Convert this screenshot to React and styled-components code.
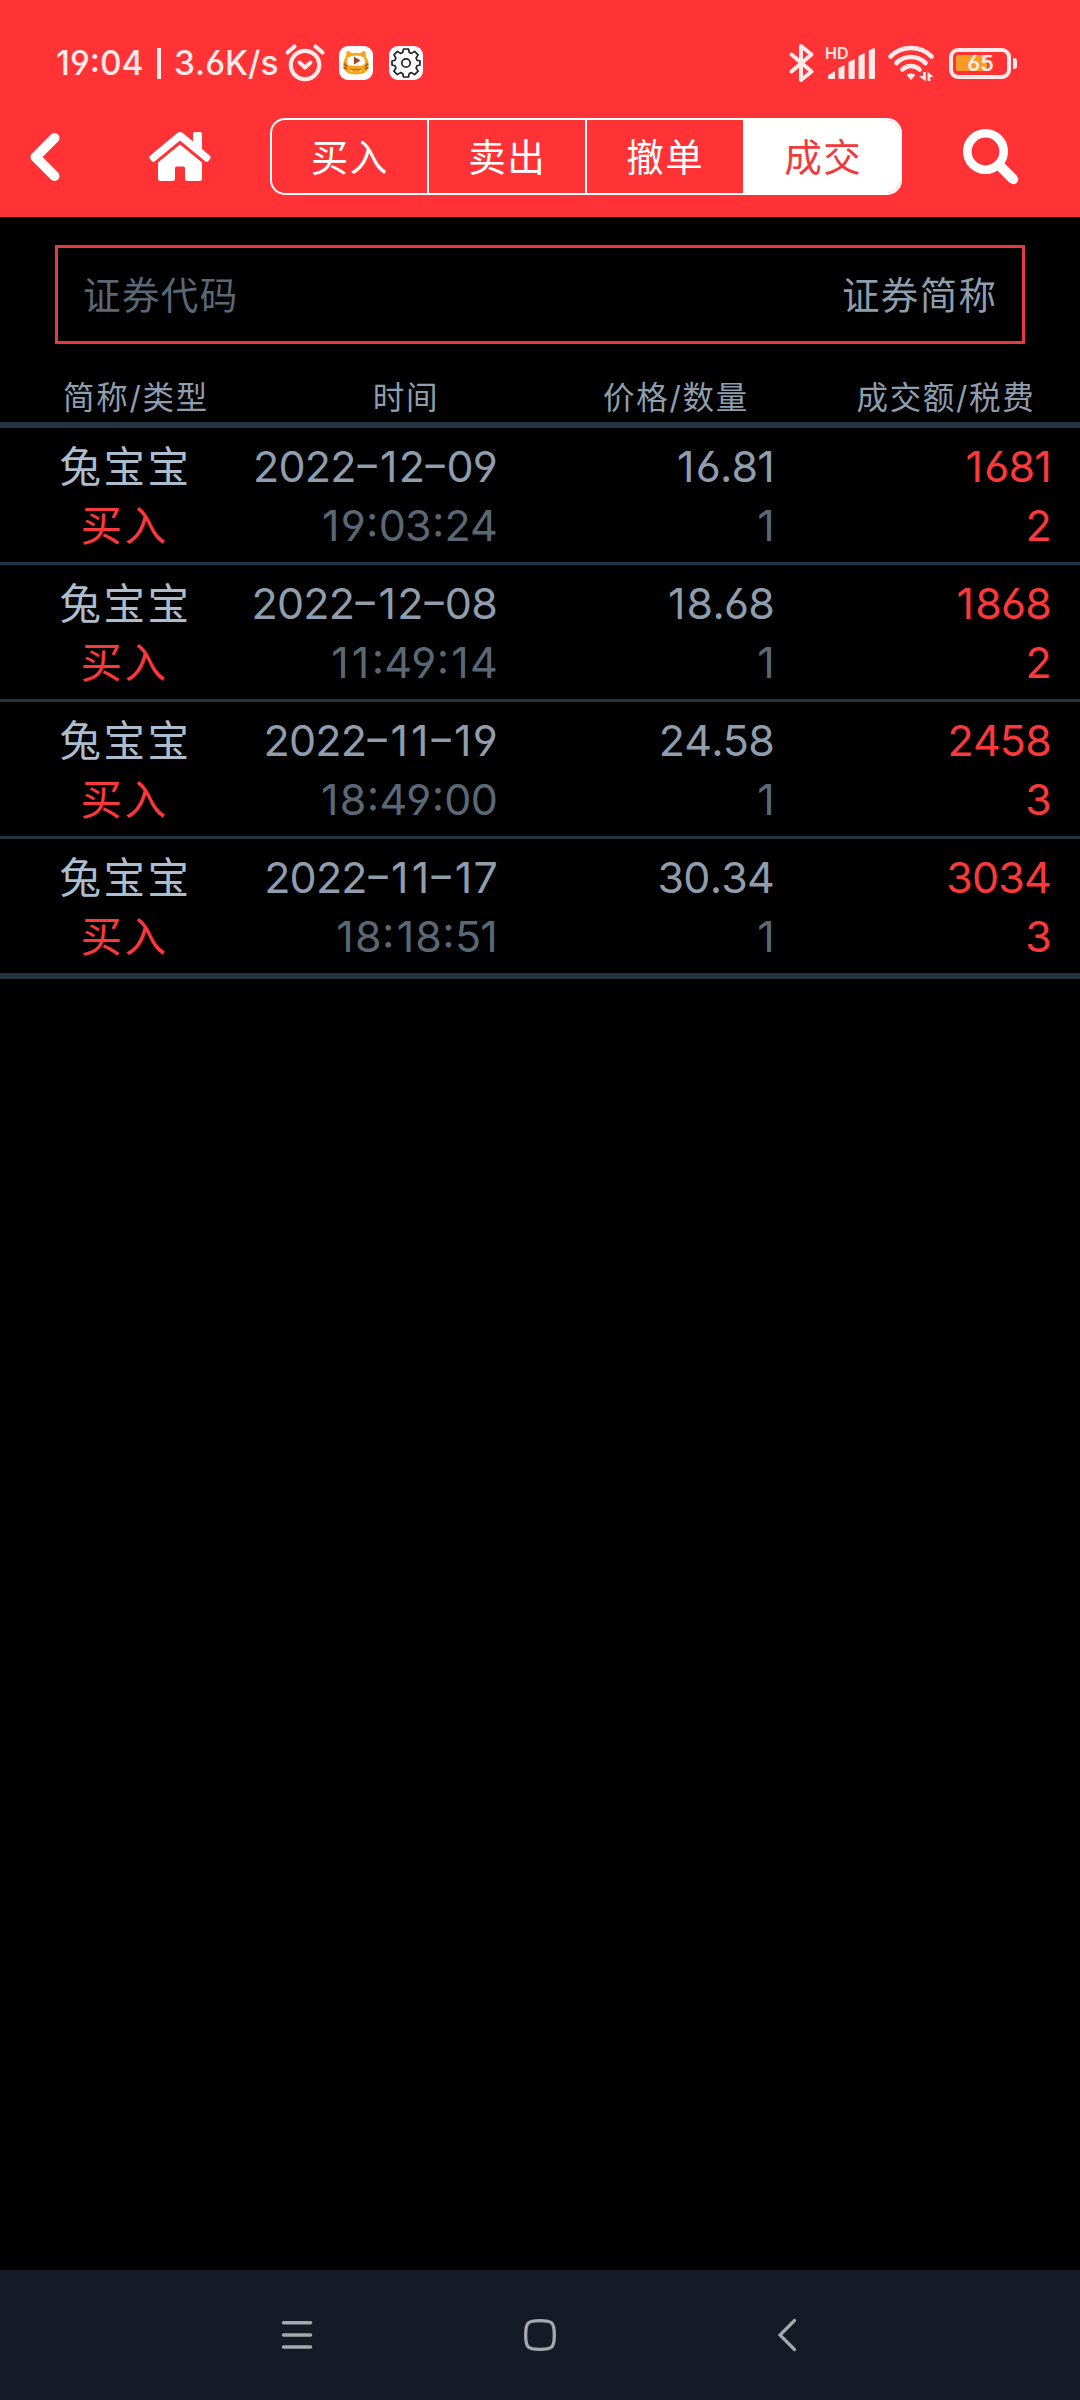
import React, { useState } from 'react';
import styled, { createGlobalStyle } from 'styled-components';

const GlobalStyle = createGlobalStyle`
  * {
    box-sizing: border-box;
  }

  body {
    margin: 0;
    background: #000;
    font-family: 'Inter', 'Noto Sans CJK SC', sans-serif;
    font-feature-settings: 'cv03', 'cv04';
    font-kerning: none;
  }
`;

const Screen = styled.div`
  display: flex;
  flex-direction: column;
  width: 1080px;
  height: 2400px;
  background: #000;
  overflow: hidden;
`;

const Header = styled.header`
  height: 217px;
  background: #ff3335;
`;

const StatusBar = styled.div`
  display: flex;
  align-items: flex-start;
  justify-content: space-between;
  height: 100px;
  padding: 43px 63px 0 56px;
  color: #ffe9e9;
`;

const StatusGroup = styled.div`
  display: flex;
  align-items: center;
  height: 40px;
`;

const StatusText = styled.span`
  width: ${props => props.width}px;
  font-size: 33.5px;
  font-weight: 500;
  line-height: 41px;
  white-space: nowrap;
`;

const StatusDivider = styled.span`
  width: 4px;
  height: 31px;
  margin-right: 13px;
  background: #ffe9e9;
`;

const Icon = styled.svg`
  display: block;
  flex: none;
  width: ${props => props.width}px;
  height: ${props => props.height}px;
  margin-left: ${props => props.$left || 0}px;
  overflow: visible;
`;

const Toolbar = styled.div`
  display: flex;
  align-items: center;
  height: 77px;
  margin-top: 18px;
`;

const IconButton = styled.button`
  display: flex;
  align-items: center;
  justify-content: center;
  width: ${props => props.width}px;
  height: 77px;
  padding: 0 1px 0 0;
  border: none;
  background: none;
  color: #fff;
  cursor: pointer;
`;

const Tabs = styled.div`
  display: grid;
  grid-template-columns: 155px repeat(3, 158px);
  width: 633px;
  height: 77px;
  border: 2px solid #fff;
  border-radius: 15px;
  overflow: hidden;
`;

const Tab = styled.button`
  padding: 2px 0 0 1px;
  border: none;
  border-left: ${props => (props.$first ? 'none' : '2px solid #fff')};
  background: ${props => (props.$active ? '#fff' : 'transparent')};
  color: ${props => (props.$active ? '#f03a3c' : '#fff')};
  font-family: inherit;
  font-size: 37.5px;
  line-height: 71px;
  letter-spacing: 1.4px;
  cursor: pointer;
`;

const SearchBox = styled.div`
  display: flex;
  align-items: center;
  justify-content: space-between;
  height: 99px;
  margin: 28px 55px 0;
  padding: 2px 24.5px 0 25px;
  border: 3px solid #e73a3e;
`;

const SearchLabel = styled.span`
  color: ${props => (props.$muted ? '#5a6876' : '#8f9dad')};
  font-size: 37.5px;
  line-height: 56px;
  letter-spacing: 1.4px;
`;

const TableHead = styled.div`
  display: grid;
  grid-template-columns: repeat(4, 1fr);
  height: 84px;
  padding-top: 28px;
  border-bottom: 6px solid #243442;
  color: #8f9dad;
  font-size: 31.5px;
  line-height: 52px;
  letter-spacing: 1.7px;
  text-align: center;
`;

const HeadCell = styled.span`
  padding-left: 2px;
`;

const TradeList = styled.div`
  flex: 1;
`;

const TradeRow = styled.div`
  display: grid;
  grid-template-columns: 248px 249px 277px 277px;
  height: ${props => (props.$last ? 140 : 137)}px;
  padding-top: 8px;
  border-bottom: ${props => (props.$last ? 6 : 3)}px solid #243442;
`;

const Cell = styled.div`
  display: flex;
  flex-direction: column;
  align-items: flex-end;
  padding-top: 1px;
  color: ${props => props.color || '#8f9dad'};
`;

const NameCell = styled(Cell)`
  align-items: center;
  padding: 2px 0 0 3px;
`;

const Name = styled.span`
  color: #adbdcd;
  font-size: 41.5px;
  line-height: 59px;
  letter-spacing: 2.5px;
`;

const Side = styled(Name)`
  padding-right: 2px;
  color: #fb393b;
`;

const FigureText = styled.span`
  color: ${props => (props.$dim ? '#5a6876' : 'inherit')};
  font-size: 43px;
  line-height: 59px;
  letter-spacing: -0.8px;
  white-space: nowrap;
`;

// stretched hyphen, sits at the middle of the digits
const Dash = styled.span`
  display: inline-block;
  width: 22.3px;
  letter-spacing: 0;
  text-align: center;
  font-feature-settings: 'case';
  transform: scaleX(1.4);
`;

const Colon = styled.span`
  padding: 0 1.1px;
  font-feature-settings: 'case';
`;

const One = styled.span`
  padding-left: ${props => (props.$last ? 0 : 2)}px;
  padding-right: ${props => (props.$last ? 0 : 2)}px;
`;

const NavBar = styled.nav`
  display: flex;
  align-items: center;
  justify-content: center;
  gap: 211px;
  height: 130px;
  background: #151b26;
  color: #a5a9af;
`;

const AlarmIcon = () => (
  <Icon width={40} height={38} viewBox="0 0 40 38" fill="none" stroke="currentColor" $left={4}>
    <circle cx="20" cy="21" r="14.200" strokeWidth="4.200" />
    <path d="M2.500 8.500 9.500 2.500M37.500 8.500l-7-6" strokeWidth="4.200" strokeLinecap="round" />
    <path d="m14.500 18.500 5.500 5 5.500-5" strokeWidth="3.800" strokeLinecap="round" strokeLinejoin="round" />
  </Icon>
);

const TigerIcon = () => (
  <Icon width={34} height={34} viewBox="0 0 34 34" $left={14}>
    <rect width="34" height="34" rx="9" fill="#fff" />
    <path d="M7.500 6q1-2 3.500 0l2 1.200q4-1 8 0L23 6q2.500-2 3.500 0l.5 5q3.500 5 2.500 10-1 7.500-12.500 7.500T4.500 21q-1-5 2.500-10z" fill="#f9a51a" />
    <path d="M9 11.500q8-4 16 0 3 8-3.500 8.300h-9Q6 19.500 9 11.500z" fill="#fff" />
    <path d="m15 10.500 6.500 4-6.500 4z" fill="#a44522" />
    <path d="M5 17.500 8 21M4.500 21.500l3.500 1.500M29 17.500 26 21M29.500 21.500 26 23" stroke="#a5542a" strokeWidth="1.700" />
    <path d="M12 23q2.500 2 5 0 2.500 2 5 0" fill="none" stroke="#a5542a" strokeWidth="1" />
    <path d="m11.500 24.500 1 1.800 1.200-1.500zM20.300 24.800l1.200 1.500 1-1.800z" fill="#fff" />
  </Icon>
);

const GearIcon = () => (
  <Icon width={34} height={34} viewBox="0 0 34 34" $left={16}>
    <rect width="34" height="34" rx="9" fill="#fff" />
    <path
      d="M14.500 3h5l.8 3.500 2.200.9 3.100-2 3.500 3.500-2 3.100.9 2.200 3 .8v4l-3 .8-.9 2.200 2 3.100-3.500 3.500-3.100-2-2.200.9-.8 3.500h-5l-.8-3.500-2.200-.9-3.100 2-3.500-3.500 2-3.100-.9-2.200-3-.8v-4l3-.8.9-2.200-2-3.100 3.500-3.500 3.100 2 2.200-.9z"
      fill="none"
      stroke="#222"
      strokeWidth="1.700"
      strokeLinejoin="round"
    />
    <circle cx="17" cy="17" r="4.200" fill="none" stroke="#222" strokeWidth="1.700" />
  </Icon>
);

const BluetoothIcon = () => (
  <Icon width={24} height={38} viewBox="0 0 24 38" fill="none" stroke="currentColor">
    <path
      d="m1.500 10.500 20 17L11 36V2l10.500 8.500-20 17"
      strokeWidth="4"
      strokeLinecap="round"
      strokeLinejoin="round"
    />
  </Icon>
);

const Signal = styled.div`
  display: flex;
  align-items: flex-start;
  width: 51px;
  height: 32px;
  margin-left: 11px;
`;

const SignalLabel = styled.span`
  width: 0;
  margin-top: -2px;
  font-size: 16px;
  font-weight: 600;
  line-height: 16px;
`;

const SignalIcon = () => (
  <Signal>
    <SignalLabel>HD</SignalLabel>
    <Icon width={48} height={32} viewBox="0 0 48 32" fill="currentColor" $left={3}>
      <path d="M0 28.500 7 24v7a1 1 0 0 1-1 1H1a1 1 0 0 1-1-1z" />
      <path d="m10.500 21 6-3v13a1 1 0 0 1-1 1h-4a1 1 0 0 1-1-1z" />
      <path d="m20.500 15 6.200-3V31a1 1 0 0 1-1 1h-4.200a1 1 0 0 1-1-1z" />
      <path d="m30.500 9 6.200-3v25a1 1 0 0 1-1 1h-4.200a1 1 0 0 1-1-1z" />
      <path d="m40.800 3.500 5.200-2.500q1 0 1 1V31a1 1 0 0 1-1 1h-4.200a1 1 0 0 1-1-1z" />
    </Icon>
  </Signal>
);

const WifiIcon = () => (
  <Icon width={46} height={34} viewBox="0 0 46 34" fill="none" stroke="currentColor" $left={12}>
    <path d="M2.500 10.500a29 29 0 0 1 41 0" strokeWidth="4.600" strokeLinecap="round" />
    <path d="M8.500 17a20.500 20.500 0 0 1 29 0" strokeWidth="4.600" strokeLinecap="round" />
    <path d="M14.500 23.500a12 12 0 0 1 17 0" strokeWidth="4.600" strokeLinecap="round" />
    <path d="M19 29q4-2.500 8 0L23 33.500z" fill="currentColor" strokeWidth="1" strokeLinejoin="round" />
    <path d="M35 26h2.800v9.500l-7-5.500H35zM39.500 35v-9.500l6 5.500h-3.200v4z" fill="currentColor" stroke="none" />
  </Icon>
);

const Battery = styled.div`
  display: flex;
  align-items: center;
  width: 62px;
  height: 31px;
  margin-left: 15px;
  padding: 3px;
  border: 4px solid #ffe9e9;
  border-radius: 9px;
`;

const BatteryFill = styled.div`
  width: 65%;
  height: 16px;
  border-radius: 2px;
  background: #f79b22;
`;

const BatteryLevel = styled.span`
  width: 0;
  margin-left: -20px;
  font-size: 21.5px;
  font-weight: 600;
  line-height: 22px;
`;

const BatteryTip = styled.span`
  width: 4px;
  height: 11px;
  margin-left: 2px;
  border-radius: 0 3px 3px 0;
  background: #ffe9e9;
`;

const BackIcon = () => (
  <Icon width={30} height={48} viewBox="0 0 30 48" fill="none" stroke="currentColor">
    <path d="M24.500 5 5.500 24l19 19" strokeWidth="10" strokeLinecap="round" strokeLinejoin="round" />
  </Icon>
);

const HomeIcon = () => (
  <Icon width={62} height={49} viewBox="0 0 62 49" fill="currentColor">
    <path d="M28 1.200q3-2.400 6 0l10 8.300V2q0-2 2-2h5q2 0 2 2v15l8 6.800q1.500 1.400.3 2.800l-2 2.600q-1.300 1.400-2.800.2L31 8.500 5.500 29.400Q4 30.600 2.700 29.200l-2-2.600q-1.200-1.400.3-2.800z" />
    <path d="m31 12.500 22 18V46.500q0 2.500-2.500 2.500H39q-3 0-3-2.500V36q0-1.500-1.500-1.500h-7Q26 34.500 26 36v10.500q0 2.500-3 2.500H11.500Q9 49 9 46.500v-16z" />
  </Icon>
);

const SearchIcon = () => (
  <Icon width={56} height={56} viewBox="0 0 56 56" fill="none" stroke="currentColor">
    <circle cx="22.500" cy="22.500" r="18.200" strokeWidth="8.600" />
    <path d="m38 38 12.500 12.500" strokeWidth="10" />
    <path d="m40 40 10.500 10.500" strokeWidth="9.500" strokeLinecap="round" />
  </Icon>
);

const MenuIcon = () => (
  <Icon width={32} height={32} viewBox="0 0 32 32" stroke="currentColor">
    <path d="M2.500 3.800h27M2.500 16h27M2.500 28h27" strokeWidth="3.600" strokeLinecap="round" />
  </Icon>
);

const SquareIcon = () => (
  <Icon width={32} height={32} viewBox="0 0 32 32" fill="none" stroke="currentColor">
    <path
      d="M16 1.700c12.500 0 14.300 1.800 14.300 14.300S28.500 30.300 16 30.300 1.700 28.500 1.700 16 3.500 1.700 16 1.700z"
      strokeWidth="3.300"
    />
  </Icon>
);

const NavBackIcon = () => (
  <Icon width={32} height={32} viewBox="0 0 32 32" fill="none" stroke="currentColor">
    <path d="M27.500 1.500 13 16l14.500 14.500" strokeWidth="3.200" strokeLinecap="round" />
  </Icon>
);

const tabs = ['买入', '卖出', '撤单', '成交'];
const columns = ['简称/类型', '时间', '价格/数量', '成交额/税费'];

const trades = [
  { name: '兔宝宝', side: '买入', date: '2022-12-09', time: '19:03:24', price: '16.81', count: 1, amount: 1681, fee: 2 },
  { name: '兔宝宝', side: '买入', date: '2022-12-08', time: '11:49:14', price: '18.68', count: 1, amount: 1868, fee: 2 },
  { name: '兔宝宝', side: '买入', date: '2022-11-19', time: '18:49:00', price: '24.58', count: 1, amount: 2458, fee: 3 },
  { name: '兔宝宝', side: '买入', date: '2022-11-17', time: '18:18:51', price: '30.34', count: 1, amount: 3034, fee: 3 }
];

const Figure = ({ value, dim }) => {
  // the narrow characters get some extra room
  const parts = String(value).split(/([-:1])/).filter(Boolean);

  return (
    <FigureText $dim={dim}>
      {parts.map((part, index) => {
        if (part === '-') return <Dash key={index}>-</Dash>;
        if (part === ':') return <Colon key={index}>:</Colon>;
        if (part === '1') return <One key={index} $last={index === parts.length - 1}>1</One>;
        return part;
      })}
    </FigureText>
  );
};

const App = () => {
  const [activeTab, setActiveTab] = useState('成交');

  return (
    <Screen>
      <GlobalStyle />
      <Header>
        <StatusBar>
          <StatusGroup>
            <StatusText width={101}>19:04</StatusText>
            <StatusDivider />
            <StatusText width={107}>3.6K/s</StatusText>
            <AlarmIcon />
            <TigerIcon />
            <GearIcon />
          </StatusGroup>
          <StatusGroup>
            <BluetoothIcon />
            <SignalIcon />
            <WifiIcon />
            <Battery>
              <BatteryFill />
              <BatteryLevel>65</BatteryLevel>
            </Battery>
            <BatteryTip />
          </StatusGroup>
        </StatusBar>
        <Toolbar>
          <IconButton width={91}>
            <BackIcon />
          </IconButton>
          <IconButton width={179}>
            <HomeIcon />
          </IconButton>
          <Tabs>
            {tabs.map((tab, index) => (
              <Tab
                key={tab}
                $first={index === 0}
                $active={tab === activeTab}
                onClick={() => setActiveTab(tab)}
              >
                {tab}
              </Tab>
            ))}
          </Tabs>
          <IconButton width={178}>
            <SearchIcon />
          </IconButton>
        </Toolbar>
      </Header>

      <SearchBox>
        <SearchLabel $muted>证券代码</SearchLabel>
        <SearchLabel>证券简称</SearchLabel>
      </SearchBox>

      <TableHead>
        {columns.map(column => (
          <HeadCell key={column}>{column}</HeadCell>
        ))}
      </TableHead>

      <TradeList>
        {trades.map((trade, index) => (
          <TradeRow key={trade.date} $last={index === trades.length - 1}>
            <NameCell>
              <Name>{trade.name}</Name>
              <Side>{trade.side}</Side>
            </NameCell>
            <Cell>
              <Figure value={trade.date} />
              <Figure value={trade.time} dim />
            </Cell>
            <Cell>
              <Figure value={trade.price} />
              <Figure value={trade.count} dim />
            </Cell>
            <Cell color="#fb393b">
              <Figure value={trade.amount} />
              <Figure value={trade.fee} />
            </Cell>
          </TradeRow>
        ))}
      </TradeList>

      <NavBar>
        <MenuIcon />
        <SquareIcon />
        <NavBackIcon />
      </NavBar>
    </Screen>
  );
};

export default App;
